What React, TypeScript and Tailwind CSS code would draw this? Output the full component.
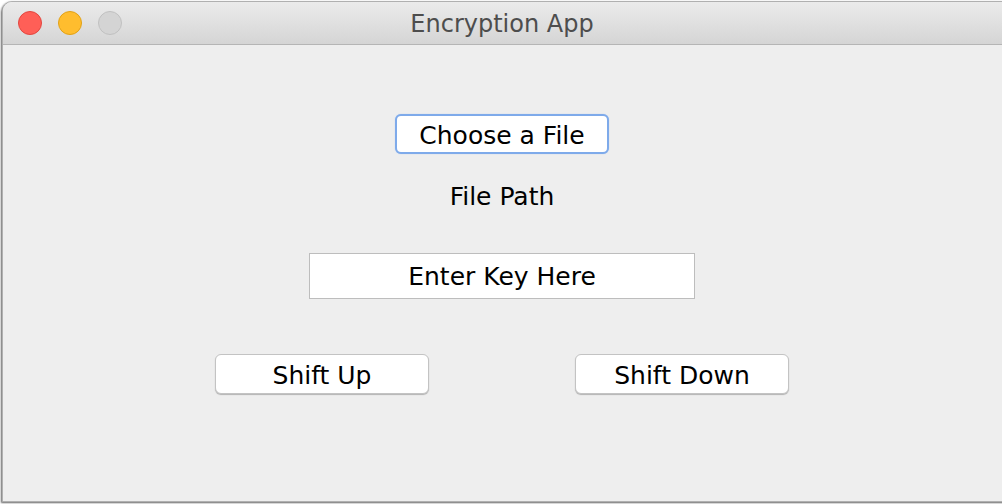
export default function App() {
    return (
        <div className="h-[504px] w-[1002px] overflow-hidden bg-[#ffffff] pl-[2px] pt-[1px]">
            {/* Window */}
            <div
                className="flex h-[501px] w-[1010px] flex-col overflow-hidden rounded-t-[10px] border border-[#b0b0b0] bg-[#eeeeee] shadow-[-1px_1px_2px_rgba(0,0,0,0.6)]"
                style={{ fontFamily: "'DejaVu Sans', sans-serif" }}
            >
                {/* Title Bar */}
                <div className="relative flex h-[43px] shrink-0 items-center border-b border-[#b5b5b5] bg-gradient-to-b from-[#ebebeb] to-[#d5d5d5]">
                    <div className="ml-[15px] flex gap-[16px]">
                        <span className="h-[24px] w-[24px] rounded-full border border-[#e2463f] bg-[#ff5f57]" />
                        <span className="h-[24px] w-[24px] rounded-full border border-[#e1a116] bg-[#ffbd2e]" />
                        <span className="h-[24px] w-[24px] rounded-full border border-[#c0c0c0] bg-[#d4d4d4]" />
                    </div>
                    <div className="absolute left-0 top-0 flex h-full w-[998px] items-center justify-center pt-[2px] text-[24px] text-[#4d4d4d]">
                        Encryption App
                    </div>
                </div>

                {/* Content */}
                <div className="flex w-[998px] flex-col items-center pt-[69px] text-[25px] text-black">
                    <button className="flex h-[40px] w-[214px] items-center justify-center rounded-[6px] border-2 border-[#7eaaea] bg-white pt-[2px] leading-none shadow-[0_0_1px_#9ec0f0]">
                        Choose a File
                    </button>
                    <div className="mt-[29px] leading-[28px]">File Path</div>
                    <div className="mt-[42px] flex h-[46px] w-[386px] items-center justify-center border border-[#bdbdbd] bg-white pt-[1px] leading-none">
                        Enter Key Here
                    </div>
                    <div className="mt-[55px] flex gap-[146px]">
                        <button className="flex h-[40px] w-[214px] items-center justify-center rounded-[6px] border border-[#c3c3c3] bg-white pt-[2px] leading-none shadow-[0_1px_1px_rgba(0,0,0,0.25)]">
                            Shift Up
                        </button>
                        <button className="flex h-[40px] w-[214px] items-center justify-center rounded-[6px] border border-[#c3c3c3] bg-white pt-[2px] leading-none shadow-[0_1px_1px_rgba(0,0,0,0.25)]">
                            Shift Down
                        </button>
                    </div>
                </div>
            </div>
        </div>
    );
}
